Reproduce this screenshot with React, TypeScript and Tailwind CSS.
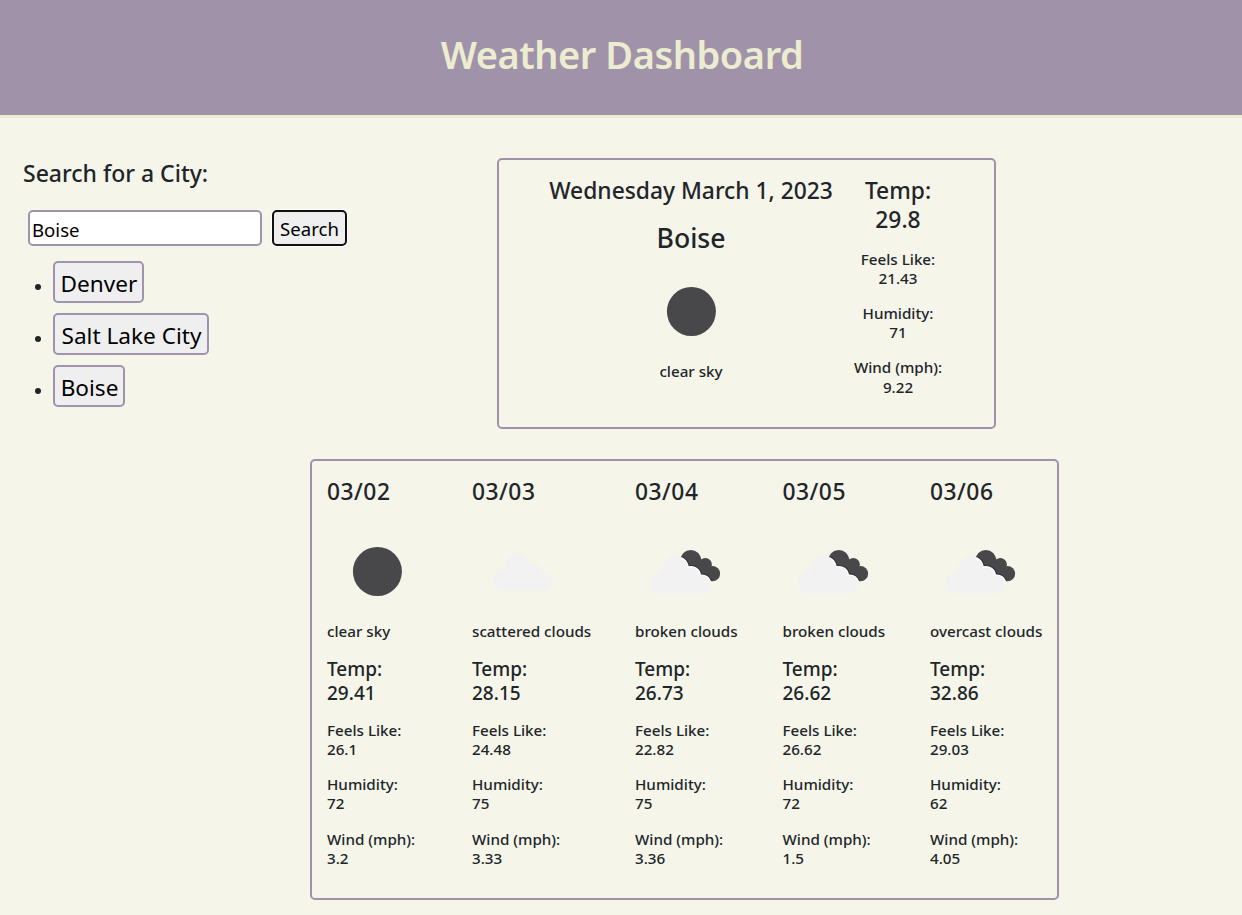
import React from "react";

type IconKind = "clear" | "scattered" | "broken";

interface Reading {
  temp: string;
  feels: string;
  humidity: string;
  wind: string;
}

interface Day extends Reading {
  date: string;
  icon: IconKind;
  sky: string;
  width: string;
}

const cities = [
  { name: "Denver", width: "w-[91px]" },
  { name: "Salt Lake City", width: "w-[156px]" },
  { name: "Boise", width: "w-[72px]" },
];

const days: Day[] = [
  { date: "03/02", icon: "clear", sky: "clear sky", temp: "29.41", feels: "26.1", humidity: "72", wind: "3.2", width: "w-[145px]" },
  { date: "03/03", icon: "scattered", sky: "scattered clouds", temp: "28.15", feels: "24.48", humidity: "75", wind: "3.33", width: "w-[163px]" },
  { date: "03/04", icon: "broken", sky: "broken clouds", temp: "26.73", feels: "22.82", humidity: "75", wind: "3.36", width: "w-[147.5px]" },
  { date: "03/05", icon: "broken", sky: "broken clouds", temp: "26.62", feels: "26.62", humidity: "72", wind: "1.5", width: "w-[147.5px]" },
  { date: "03/06", icon: "broken", sky: "overcast clouds", temp: "32.86", feels: "29.03", humidity: "62", wind: "4.05", width: "w-[113px]" },
];

const cloud =
  "M31 67.5C25 67.5 20.8 63 20.8 57.1C20.8 50.5 26 45.7 32.7 45.7C33 37 38.2 30.5 45.7 30.5C51.8 30.5 56.3 34.9 57.6 41.2C63.5 39.4 69.5 43.4 69.3 50.4C75.5 49.8 80 53.5 80 59C80 64 76.4 67.5 71.5 67.5Z";

function WeatherIcon({ kind }: { kind: IconKind }) {
  return (
    <svg className="block size-[100px]" viewBox="0 0 100 100" aria-hidden="true">
      {kind === "clear" && <circle cx="50.4" cy="50.5" r="24.5" fill="#48484a" />}
      {kind === "scattered" && <path d={cloud} transform="translate(0.2 1.7)" fill="#f2f2f2" />}
      {kind === "broken" && (
        <>
          <g fill="#48484a">
            <circle cx="55.8" cy="39.5" r="10.5" />
            <circle cx="70.4" cy="43.6" r="6.5" />
            <circle cx="77.5" cy="52.7" r="7.6" />
            <path d="M50 42L65 36L73 48L77 60.3L66 58Z" />
          </g>
          <path d={cloud} transform="translate(-5.4 4.8)" fill="#f2f2f2" />
          <path
            d="M46 36.4C50.2 38.2 52.4 41.7 53 46C59.2 44.3 65.2 48.1 65.3 54.1C69.9 53.6 73.7 55.8 75.5 60.4L70 66L54 56L44 42Z"
            fill="#f2f2f2"
          />
          <path
            d="M47.2 35.7C51.2 37.6 53.4 40.8 54.1 44.9C60.2 43.8 66 47.4 66.4 53.2C70.6 52.9 74.4 55 76.5 59.8"
            fill="none"
            stroke="#2a2a2c"
            strokeWidth="0.9"
          />
          <path
            d="M46.3 36.6C50.2 38.4 52.5 41.7 53.1 46C59.2 44.5 65 48.1 65.3 54.2C69.8 53.7 73.7 55.8 75.5 60.4"
            fill="none"
            stroke="#ffffff"
            strokeWidth="1.3"
          />
        </>
      )}
    </svg>
  );
}

function Metric({ label, value }: { label: string; value: string }) {
  return (
    <p className="mb-4 text-[15.2px] leading-[19.2px]">
      {label}
      <br />
      {value}
    </p>
  );
}

function Metrics({ reading }: { reading: Reading }) {
  return (
    <>
      <Metric label="Feels Like:" value={reading.feels} />
      <Metric label="Humidity:" value={reading.humidity} />
      <Metric label="Wind (mph):" value={reading.wind} />
    </>
  );
}

const boise: Reading = { temp: "29.8", feels: "21.43", humidity: "71", wind: "9.22" };

export default function App() {
  return (
    <div className="h-[915px] overflow-hidden bg-[#f5f5e9] font-['Noto_Sans','Open_Sans',sans-serif] font-medium text-[#212529]">
      <header className="flex h-[118px] justify-center border-b-[3px] border-[#ececd1] bg-[#a093a9] pt-[30px] pl-[2px]">
        <h1 className="text-[38px] leading-[48px] font-semibold tracking-[-0.45px] text-[#ececd1]">Weather Dashboard</h1>
      </header>

      <main>
        <div className="flex pt-10">
          <section className="w-[497px] shrink-0 pl-[23px]">
            <h2 className="pt-px text-[23px] leading-[29px]">Search for a City:</h2>
            <form className="mt-[22px] ml-[5px] flex gap-[10px] font-normal text-black" onSubmit={(e) => e.preventDefault()}>
              <input
                className="h-9 w-[234px] rounded-[5px] border-2 border-[#a093ad] bg-white px-[2px] pt-[2px] text-[18.6px] outline-none"
                defaultValue="Boise"
                aria-label="City"
              />
              <button className="h-9 w-[75px] rounded-[5px] border-2 border-[#101010] bg-[#efefef] pt-[2px] text-[18.6px] leading-[30px] shadow-[0_0_0_1px_#ffffff]">
                Search
              </button>
            </form>
            <ul className="mt-[15px] flex flex-col gap-[10px]">
              {cities.map((city) => (
                <li key={city.name} className="flex h-[42px] items-center pl-3">
                  <span className="mt-[9px] mr-3 size-[6px] rounded-full bg-[#212529]" />
                  <button
                    className={`${city.width} h-[42px] rounded-[5px] border-2 border-[#a093ad] bg-[#efefef] pt-[3px] pl-px text-[22.6px] leading-[35px] font-normal whitespace-nowrap text-black`}
                  >
                    {city.name}
                  </button>
                </li>
              ))}
            </ul>
          </section>

          <section className="flex h-[271px] w-[499px] justify-center rounded-[5px] border-2 border-[#a093a9] pt-[17px] text-center">
            <div className="mr-[19px] flex w-[284px] flex-col items-center">
              <h2 className="text-[22.8px] leading-[28.8px] whitespace-nowrap">Wednesday March 1, 2023</h2>
              <h3 className="mt-4 text-[26.6px] leading-[33.6px]">Boise</h3>
              <div className="mt-[6px]">
                <WeatherIcon kind="clear" />
              </div>
              <p className="mt-px text-[15.2px] leading-[19.2px]">clear sky</p>
            </div>
            <div className="w-[92px]">
              <p className="mb-[15px] text-[22.8px] leading-[28.8px]">
                Temp:
                <br />
                {boise.temp}
              </p>
              <Metrics reading={boise} />
            </div>
          </section>
        </div>

        <section className="mt-[30px] ml-[310px] flex h-[441px] w-[749px] rounded-[5px] border-2 border-[#a093a9] pt-[17px] pl-[15px]">
          {days.map((day) => (
            <article key={day.date} className={`${day.width} shrink-0`}>
              <h2 className="text-[22.8px] leading-[28.8px] tracking-[0.5px]">{day.date}</h2>
              <div className="mt-[14px]">
                <WeatherIcon kind={day.icon} />
              </div>
              <p className="mt-[0.8px] text-[15.2px] leading-[19.2px] whitespace-nowrap">{day.sky}</p>
              <p className="mt-4 mb-4 text-[19px] leading-6">
                Temp:
                <br />
                {day.temp}
              </p>
              <Metrics reading={day} />
            </article>
          ))}
        </section>
      </main>
    </div>
  );
}
